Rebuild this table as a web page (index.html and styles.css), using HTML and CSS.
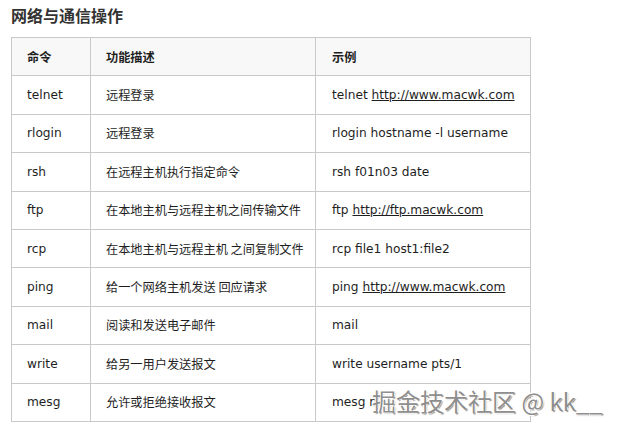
FILE: index.html
```html
<!DOCTYPE html>
<html lang="zh">
<head>
<meta charset="utf-8">
<link rel="stylesheet" href="styles.css">
</head>
<body>
<h3 class="title">网络与通信操作</h3>
<table class="cmd-table">
  <colgroup>
    <col class="c1"><col class="c2"><col class="c3">
  </colgroup>
  <thead>
    <tr><th>命令</th><th>功能描述</th><th>示例</th></tr>
  </thead>
  <tbody>
    <tr><td>telnet</td><td>远程登录</td><td>telnet <a href="#">http://www.macwk.com</a></td></tr>
    <tr><td>rlogin</td><td>远程登录</td><td>rlogin hostname -l username</td></tr>
    <tr><td>rsh</td><td>在远程主机执行指定命令</td><td>rsh f01n03 date</td></tr>
    <tr><td>ftp</td><td>在本地主机与远程主机之间传输文件</td><td>ftp <a href="#">http://ftp.macwk.com</a></td></tr>
    <tr><td>rcp</td><td>在本地主机与远程主机 之间复制文件</td><td>rcp file1 host1:file2</td></tr>
    <tr><td>ping</td><td>给一个网络主机发送 回应请求</td><td>ping <a href="#">http://www.macwk.com</a></td></tr>
    <tr><td>mail</td><td>阅读和发送电子邮件</td><td>mail</td></tr>
    <tr><td>write</td><td>给另一用户发送报文</td><td>write username pts/1</td></tr>
    <tr><td>mesg</td><td>允许或拒绝接收报文</td><td>mesg n</td></tr>
  </tbody>
</table>
<div class="watermark">掘金技术社区 @ kk__</div>
</body>
</html>
```

FILE: styles.css
```css
html, body {
  margin: 0;
  padding: 0;
  background: #fff;
}
body {
  position: relative;
  padding: 0 11px;
  font-family: "DejaVu Sans", "Noto Sans CJK SC", sans-serif;
  color: #1e1e1e;
  width: 628px;
  height: 433px;
  box-sizing: border-box;
  overflow: hidden;
}
.title {
  margin: 0;
  padding-top: 5px;
  height: 37px;
  box-sizing: border-box;
  font-family: "Noto Sans CJK SC", sans-serif;
  font-size: 16px;
  line-height: 20px;
  font-weight: 700;
  color: #333;
}
.cmd-table {
  border-collapse: collapse;
  width: 519px;
  table-layout: fixed;
  font-size: 12.2px;
}
.c1 { width: 79px; }
.c2 { width: 225px; }
.c3 { width: 215px; }
.cmd-table th,
.cmd-table td {
  border: 1px solid #c9c9c9;
  height: 38.4px;
  padding: 0 15px;
  text-align: left;
  vertical-align: middle;
  white-space: nowrap;
  box-sizing: border-box;
}
.cmd-table td:nth-child(2),
.cmd-table th:nth-child(2) {
  font-family: "Noto Sans CJK SC", sans-serif;
  font-size: 12.2px;
}
.cmd-table th {
  background: #f8f8f8;
  font-family: "Noto Sans CJK SC", sans-serif;
  font-weight: 700;
  font-size: 12.2px;
}
.cmd-table td:nth-child(3),
.cmd-table th:nth-child(3) {
  padding-left: 16px;
}
.cmd-table a {
  color: #1e1e1e;
  text-decoration: underline;
}
.watermark {
  position: absolute;
  left: 372px;
  top: 384px;
  font-family: "Noto Sans CJK SC", sans-serif;
  font-size: 24px;
  line-height: 34px;
  color: #8e8e8e;
  white-space: nowrap;
  text-shadow: -1px -1px 0 #fff, 1px -1px 0 #fff, -1px 1px 0 #fff, 1px 1px 1px rgba(0,0,0,0.45);
}
```
